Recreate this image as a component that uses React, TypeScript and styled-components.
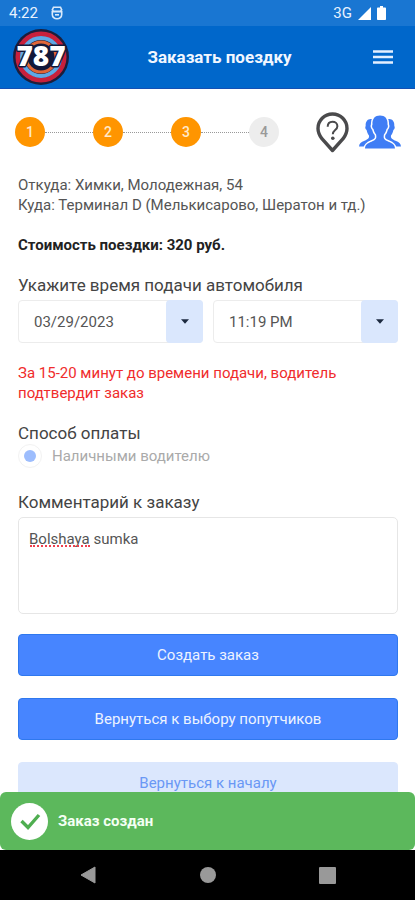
import React, { useState } from "react";
import styled, { createGlobalStyle } from "styled-components";

const GlobalStyle = createGlobalStyle`
  *, *::before, *::after { box-sizing: border-box; }
  body {
    margin: 0;
    background: #fff;
    color: #444;
    font-family: Roboto, "Noto Sans", sans-serif;
    font-size: 14px;
  }
  button, input, select, textarea { font: inherit; }
`;

const Screen = styled.div`
  display: flex;
  flex-direction: column;
  height: 100vh;
`;

const StatusBar = styled.div`
  display: flex;
  align-items: center;
  justify-content: space-between;
  flex: none;
  height: 26px;
  padding: 0 29px 0 9px;
  background: #1976d2;
  color: #e8f2ff;
  font-size: 15px;
`;

const StatusGroup = styled.div<{ $gap: number }>`
  display: flex;
  align-items: center;
  gap: ${(p) => p.$gap}px;
`;

const Header = styled.header`
  display: grid;
  grid-template-columns: 56px 1fr 26px;
  align-items: center;
  flex: none;
  height: 63px;
  padding: 0 19px 0 13px;
  background: #0067cb;
  border-bottom: 1px solid #1450b4;
`;

const Logo = styled.a`
  display: block;
  height: 56px;
`;

const Title = styled.h1`
  margin: 0;
  color: #f2f7ff;
  font-size: 17px;
  font-weight: 700;
  text-align: center;
`;

const MenuButton = styled.button`
  display: flex;
  padding: 9px 3px;
  border: 0;
  background: none;
  color: #e3efff;
`;

const Body = styled.div`
  position: relative;
  flex: 1;
  min-height: 0;
`;

const Content = styled.main`
  height: 100%;
  overflow-y: auto;
  scrollbar-width: none;
`;

const Progress = styled.div`
  display: flex;
  align-items: center;
  gap: 10px;
  height: 86px;
  padding: 0 14px 0 15px;
`;

const Steps = styled.ol`
  display: flex;
  align-items: center;
  flex: 1;
  margin: 0 27px 0 0;
  padding: 0;
  list-style: none;
`;

const StepItem = styled.li`
  display: flex;
  align-items: center;

  & + & { flex: 1; }
  & + &::before {
    content: "";
    flex: 1;
    border-top: 1px dotted #999;
  }
`;

const StepCircle = styled.span<{ $done: boolean }>`
  display: grid;
  place-items: center;
  width: 30px;
  height: 30px;
  border-radius: 50%;
  background: ${(p) => (p.$done ? "#ff9500" : "#ededed")};
  color: ${(p) => (p.$done ? "#ffe9cc" : "#999")};
  font-weight: 500;
`;

const IconButton = styled.button`
  display: flex;
  padding: 0;
  border: 0;
  background: none;
`;

const Form = styled.form`
  display: flex;
  flex-direction: column;
  padding: 0 17px 24px 18px;
`;

const Paragraph = styled.p<{ $tone?: "strong" | "warning" }>`
  margin: 0 0 20px;
  font-size: 15px;
  line-height: 20px;
  color: ${(p) => (p.$tone === "warning" ? "#f02c2c" : p.$tone === "strong" ? "#222" : "#555")};
  font-weight: ${(p) => (p.$tone === "strong" ? 700 : 400)};
`;

const Heading = styled.h2`
  margin: 0;
  color: #444;
  font-size: 17px;
  font-weight: 400;
  line-height: 20px;
`;

const FieldRow = styled.div`
  display: grid;
  grid-template-columns: 1fr 1fr;
  gap: 10px;
  margin: 5px 0 20px;
`;

const SelectBox = styled.div`
  display: grid;
  grid-template-columns: 1fr 37px;
  height: 43px;
`;

const Select = styled.select`
  grid-area: 1 / 1 / 2 / 3;
  min-width: 0;
  padding: 0 44px 0 15px;
  border: 1px solid #ececec;
  border-radius: 4px;
  appearance: none;
  background: #fff;
  color: #555;
  font-size: 15px;
`;

const SelectArrow = styled.span`
  grid-area: 1 / 2 / 2 / 3;
  display: grid;
  place-items: center;
  border-radius: 4px;
  background: #dae7fd;
  pointer-events: none;
`;

const RadioLabel = styled.label`
  display: flex;
  align-items: center;
  gap: 10px;
  height: 26px;
  margin-bottom: 23px;
  color: #aaa;
  font-size: 15px;
`;

const Radio = styled.input`
  display: grid;
  place-items: center;
  width: 24px;
  height: 24px;
  margin: 0;
  border: 1px solid #f2f2f2;
  border-radius: 50%;
  appearance: none;

  &:checked::before {
    content: "";
    width: 12px;
    height: 12px;
    border-radius: 50%;
    background: #9dbdfd;
  }
`;

const CommentBox = styled.div`
  position: relative;
  display: flex;
  margin: 5px 0 20px;
`;

const TextArea = styled.textarea`
  width: 100%;
  height: 97px;
  padding: 11px 10px;
  border: 1px solid #e6e6e6;
  border-radius: 5px;
  outline: 0;
  resize: none;
  color: #555;
  font-size: 15px;
  line-height: 20px;
`;

const SpellingMark = styled.span`
  position: absolute;
  top: 28px;
  left: 12px;
  width: 60px;
  border-bottom: 2px dotted #ee3f4d;
  pointer-events: none;
`;

const ActionButton = styled.button<{ $soft?: boolean }>`
  height: 42px;
  margin-bottom: 22px;
  padding: 0 16px 1px;
  border: 1px solid ${(p) => (p.$soft ? "#dbe7fd" : "#2f78ee")};
  border-radius: 4px;
  background: ${(p) => (p.$soft ? "#dbe7fd" : "#4785ff")};
  color: ${(p) => (p.$soft ? "#6a98f5" : "#edf3ff")};
  font-size: 15px;
`;

const Toast = styled.div`
  position: absolute;
  right: 0;
  bottom: 0;
  left: 0;
  display: flex;
  align-items: center;
  gap: 10px;
  height: 58px;
  padding: 0 11px;
  border-radius: 6px;
  background: #5cb85c;
  color: #f4fff4;
  font-size: 15px;
  font-weight: 700;
`;

const NavBar = styled.nav`
  display: grid;
  grid-template-columns: repeat(3, 120px);
  justify-content: center;
  flex: none;
  height: 50px;
  background: #000;
`;

const NavButton = styled.button`
  display: grid;
  place-items: center;
  padding: 0;
  border: 0;
  background: none;
`;

const LogoMark = () => (
  <svg width="56" height="56" viewBox="0 0 56 56" aria-hidden="true">
    <circle cx="28" cy="28" r="28" fill="#1b1e3c" />
    <circle cx="28" cy="28" r="23" fill="none" stroke="#c8203c" strokeWidth="5" />
    <circle cx="28" cy="28" r="19" fill="none" stroke="#5fa8e6" strokeWidth="4" />
    <circle cx="28" cy="28" r="15" fill="none" stroke="#e06638" strokeWidth="3" />
    <circle cx="28" cy="28" r="13" fill="#12183a" />
    <text
      x="28"
      y="37"
      textAnchor="middle"
      fontFamily="Open Sans, sans-serif"
      fontSize="28"
      fontWeight="800"
      fill="#fff"
      stroke="#12183a"
      strokeWidth="3"
      strokeLinejoin="round"
      paintOrder="stroke"
    >
      787
    </text>
  </svg>
);

const PotIcon = () => (
  <svg width="12" height="14" viewBox="0 0 12 14" aria-hidden="true">
    <path
      d="M2.5 1.2h7l1.2 2.6-1.2 1.4h-7L1.3 3.8zM1.3 5.8h9.4v2.6A4.4 4.4 0 0 1 6 12.8a4.4 4.4 0 0 1-4.7-4.4z"
      fill="none"
      stroke="#d9e9fb"
      strokeWidth="1.6"
    />
    <path d="M4 8.8h4" stroke="#d9e9fb" strokeWidth="1.6" />
  </svg>
);

const SignalIcon = () => (
  <svg width="13" height="13" viewBox="0 0 13 13" aria-hidden="true">
    <path d="M13 0v13H0z" fill="#fff" />
  </svg>
);

const BatteryIcon = () => (
  <svg width="9" height="14" viewBox="0 0 9 14" aria-hidden="true">
    <path d="M3 0h3v1.6h2.2q.8 0 .8.8v10.8q0 .8-.8.8H.8q-.8 0-.8-.8V2.4q0-.8.8-.8H3z" fill="#fff" />
  </svg>
);

const MenuIcon = () => (
  <svg width="20" height="14" viewBox="0 0 20 14" aria-hidden="true">
    <path d="M0 1.500h20M0 7h20M0 12.500h20" stroke="currentColor" strokeWidth="2.4" />
  </svg>
);

const PinIcon = () => (
  <svg width="33" height="41" viewBox="0 0 33 41" aria-hidden="true">
    <path
      d="M16.5 2C8.300 2 2 8.400 2 16.400c0 3.900 1.500 7 3.900 10.300L16.500 38.500l10.600-11.800c2.400-3.300 3.900-6.400 3.900-10.300C31 8.400 24.700 2 16.500 2z"
      fill="#fff"
      stroke="#4a4a4c"
      strokeWidth="3.4"
      strokeLinejoin="round"
    />
    <path
      d="M11.700 14.800c0-3.200 2-5 4.800-5s4.900 1.800 4.900 4.400c0 3.800-4.600 3.800-4.600 8"
      fill="none"
      stroke="#4a4a4c"
      strokeWidth="2"
    />
    <circle cx="16.800" cy="26.200" r="1.800" fill="#4a4a4c" />
  </svg>
);

const PeopleIcon = () => (
  <svg width="42" height="34" viewBox="0 0 42 34" aria-hidden="true">
    <path
      d="M14 4.500C9.500 3 6.300 6 6.700 11c-.9 1.200-.3 3.200.9 4 .5 2.500 1.400 4.300 2.400 5.500.4 2.500-.8 3.700-4.500 5.200C2 27 .2 28.500 0 31.500h12L21 20V6z"
      fill="#3f7df5"
    />
    <path
      d="M28 4.500c4.500-1.500 7.700 1.500 7.300 6.500.9 1.200.3 3.200-.9 4-.5 2.500-1.400 4.300-2.400 5.500-.4 2.500.8 3.700 4.500 5.200 3.500 1.300 5.300 2.800 5.500 5.800H30L21 20V6z"
      fill="#3f7df5"
    />
    <path
      d="M21 .5c-5 0-8 3.300-7.500 9-.9 1.300-.3 3.700 1 4.600.5 2.500 1.600 4.400 2.600 5.500.9 4.200-.5 5.600-4.600 7.100C8.600 28.200 6.200 29.500 6 33.500h30c-.2-4-2.600-5.300-6.500-6.800-4.100-1.500-5.500-2.900-4.600-7.100 1-1.100 2.100-3 2.600-5.500 1.300-.9 1.900-3.300 1-4.600.5-5.700-2.500-9-7.500-9z"
      fill="#3f7df5"
      stroke="#fff"
      strokeWidth="3"
      paintOrder="stroke"
    />
  </svg>
);

const CaretIcon = () => (
  <svg width="8" height="5" viewBox="0 0 8 5" aria-hidden="true">
    <path d="M0 .3h8L4 4.700z" fill="#1c2a40" />
  </svg>
);

const CheckIcon = () => (
  <svg width="37" height="37" viewBox="0 0 37 37" aria-hidden="true">
    <circle cx="18.500" cy="18.500" r="18.500" fill="#fff" />
    <path d="M10.500 18l6.500 6.500L28 12" fill="none" stroke="#4fae50" strokeWidth="3.4" />
  </svg>
);

const STEPS = [1, 2, 3, 4];
const CURRENT_STEP = 3;

const PickerField = ({ label, value }: { label: string; value: string }) => (
  <SelectBox>
    <Select aria-label={label} defaultValue={value}>
      <option>{value}</option>
    </Select>
    <SelectArrow>
      <CaretIcon />
    </SelectArrow>
  </SelectBox>
);

export default function App() {
  const [comment, setComment] = useState("Bolshaya sumka");

  return (
    <>
      <GlobalStyle />
      <Screen>
        <StatusBar>
          <StatusGroup $gap={13}>
            <span>4:22</span>
            <PotIcon />
          </StatusGroup>
          <StatusGroup $gap={6}>
            <span>3G</span>
            <SignalIcon />
            <BatteryIcon />
          </StatusGroup>
        </StatusBar>
        <Header>
          <Logo href="#" aria-label="787">
            <LogoMark />
          </Logo>
          <Title>Заказать поездку</Title>
          <MenuButton type="button" aria-label="Меню">
            <MenuIcon />
          </MenuButton>
        </Header>
        <Body>
          <Content>
            <Progress>
              <Steps>
                {STEPS.map((step) => (
                  <StepItem key={step}>
                    <StepCircle $done={step <= CURRENT_STEP}>{step}</StepCircle>
                  </StepItem>
                ))}
              </Steps>
              <IconButton type="button" aria-label="Помощь">
                <PinIcon />
              </IconButton>
              <IconButton type="button" aria-label="Попутчики">
                <PeopleIcon />
              </IconButton>
            </Progress>
            <Form onSubmit={(e) => e.preventDefault()}>
              <Paragraph>
                Откуда: Химки, Молодежная, 54
                <br />
                Куда: Терминал D (Мелькисарово, Шератон и тд.)
              </Paragraph>
              <Paragraph $tone="strong">Стоимость поездки: 320 руб.</Paragraph>
              <Heading>Укажите время подачи автомобиля</Heading>
              <FieldRow>
                <PickerField label="Дата подачи" value="03/29/2023" />
                <PickerField label="Время подачи" value="11:19 PM" />
              </FieldRow>
              <Paragraph $tone="warning">
                За 15-20 минут до времени подачи, водитель подтвердит заказ
              </Paragraph>
              <Heading>Способ оплаты</Heading>
              <RadioLabel>
                <Radio type="radio" name="payment" defaultChecked disabled />
                Наличными водителю
              </RadioLabel>
              <Heading as="label" htmlFor="comment">
                Комментарий к заказу
              </Heading>
              <CommentBox>
                <TextArea
                  id="comment"
                  value={comment}
                  onChange={(e) => setComment(e.target.value)}
                />
                {comment.startsWith("Bolshaya") && <SpellingMark />}
              </CommentBox>
              <ActionButton type="submit">Создать заказ</ActionButton>
              <ActionButton type="button">Вернуться к выбору попутчиков</ActionButton>
              <ActionButton type="button" $soft>
                Вернуться к началу
              </ActionButton>
            </Form>
          </Content>
          <Toast role="status">
            <CheckIcon />
            Заказ создан
          </Toast>
        </Body>
        <NavBar>
          <NavButton type="button" aria-label="Назад">
            <svg width="16" height="18" viewBox="0 0 16 18" aria-hidden="true">
              <path d="M15 1v16L1 9z" fill="#999" stroke="#999" strokeLinejoin="round" />
            </svg>
          </NavButton>
          <NavButton type="button" aria-label="Домой">
            <svg width="16" height="16" viewBox="0 0 16 16" aria-hidden="true">
              <circle cx="8" cy="8" r="8" fill="#999" />
            </svg>
          </NavButton>
          <NavButton type="button" aria-label="Недавние">
            <svg width="17" height="17" viewBox="0 0 17 17" aria-hidden="true">
              <rect width="17" height="17" rx="1" fill="#999" />
            </svg>
          </NavButton>
        </NavBar>
      </Screen>
    </>
  );
}
